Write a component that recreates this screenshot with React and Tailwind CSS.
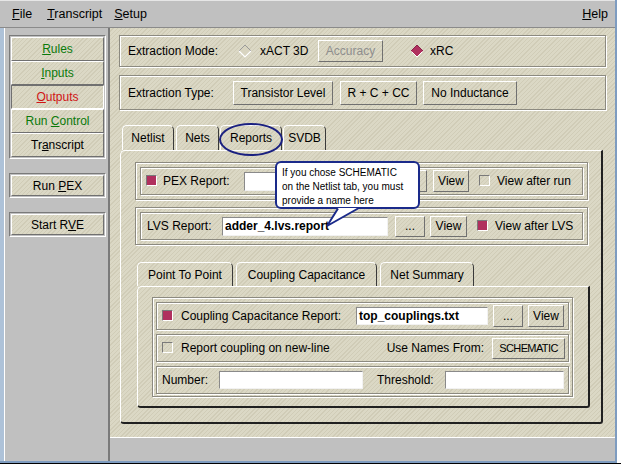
import React from "react";

const TEX =
  "bg-[#d8d4c0] bg-[repeating-linear-gradient(135deg,#dbd8c5_0px,#dbd8c5_2px,#d0ccb7_2px,#d0ccb7_3px)]";

function Check({ on }) {
  return (
    <span
      className={
        "inline-block shrink-0 w-[11px] h-[11px] border border-t-[#7a7a7a] border-l-[#7a7a7a] border-r-white border-b-white " +
        (on ? "bg-[#b0305e]" : TEX)
      }
    />
  );
}

function Btn({ children, className = "" }) {
  return (
    <div
      className={
        "flex items-center justify-center shrink-0 border border-t-white border-l-white border-r-[#707070] border-b-[#707070] " +
        TEX +
        " " +
        className
      }
    >
      {children}
    </div>
  );
}

function Input({ children, className = "" }) {
  return (
    <div
      className={
        "flex items-center shrink-0 bg-white border border-t-[#8a8a8a] border-l-[#8a8a8a] border-r-[#f2f2f2] border-b-[#f2f2f2] pl-[2px] font-bold " +
        className
      }
    >
      {children}
    </div>
  );
}

const etched =
  "border border-[#8c8a80] shadow-[inset_1px_1px_0_#ffffff,1px_1px_0_#ffffff]";

function Tab({ children, className = "" }) {
  return (
    <div
      className={
        "flex items-center justify-center shrink-0 h-full border-l border-t border-r border-l-white border-t-white border-r-[#3a3a3a] rounded-t-[5px] " +
        className
      }
    >
      {children}
    </div>
  );
}

function LeftBtn({ children, className = "", sunken = false, tall = true }) {
  return (
    <div
      className={
        "flex items-center justify-center w-[93px] border " +
        TEX +
        " " +
        (tall ? "h-[24px] " : "h-[21px] ") +
        (sunken
          ? "border-t-[#707070] border-l-[#707070] border-r-white border-b-white "
          : "border-t-white border-l-white border-r-[#707070] border-b-[#707070] ") +
        className
      }
    >
      {children}
    </div>
  );
}

function HollowDiamond() {
  return (
    <svg width="14" height="14" viewBox="0 0 14 14" className="shrink-0">
      <path d="M7 1 L13 7 L7 13 L1 7 Z" fill="#d8d4c0" />
      <path d="M1 7 L7 1 L13 7" stroke="#9a9a9a" strokeWidth="1" fill="none" />
      <path d="M1 7 L7 13 L13 7" stroke="#ffffff" strokeWidth="1.2" fill="none" />
    </svg>
  );
}

function FilledDiamond() {
  return (
    <svg width="14" height="14" viewBox="0 0 14 14" className="shrink-0">
      <path d="M7 1 L13 7 L7 13 L1 7 Z" fill="#b0305e" />
      <path d="M1 7 L7 1 L13 7" stroke="#8a2048" strokeWidth="1" fill="none" />
      <path d="M1.5 7.5 L7 13 L12.5 7.5" stroke="#ffffff" strokeWidth="1" fill="none" />
    </svg>
  );
}

const frame =
  "border border-t-[#7a7a7a] border-l-[#7a7a7a] border-r-white border-b-white p-[1px] w-[97px]";

export default function App() {
  return (
    <div className="relative w-[621px] h-[466px] overflow-hidden bg-white font-['Liberation_Sans',Arial,sans-serif] text-[12px] leading-none text-black">
      <div className="flex flex-col w-[617px] h-[463px] border-r-2 border-b-2 border-[#7e9cc0]">
        {/* Menu bar */}
        <div className="flex items-center h-[28px] shrink-0 bg-[#c0c0c0] border-t border-t-[#e6e6e6] border-b border-b-[#8a8a8a] text-[12.5px] pl-[12px] pt-[1px]">
          <span>
            <u>F</u>ile
          </span>
          <span className="ml-[15px]">
            <u>T</u>ranscript
          </span>
          <span className="ml-[12px]">
            <u>S</u>etup
          </span>
          <span className="ml-auto mr-[7px]">
            <u>H</u>elp
          </span>
        </div>

        {/* Body */}
        <div className="flex flex-1 min-h-0">
          <div className="w-[4px] shrink-0 bg-[#aec2d8]" />
          {/* Left panel */}
          <div className="flex flex-col w-[106px] shrink-0 bg-[#c0c0c0] border-l border-l-white border-r-2 border-r-[#7a7a7a] pl-[4px] pt-[7px]">
            <div className={"flex flex-col " + frame}>
              <LeftBtn className="text-[#0a7a0a]">
                <span>
                  <u>R</u>ules
                </span>
              </LeftBtn>
              <LeftBtn className="text-[#0a7a0a]">
                <span>
                  <u>I</u>nputs
                </span>
              </LeftBtn>
              <LeftBtn sunken className="text-[#d01414]">
                <span>
                  <u>O</u>utputs
                </span>
              </LeftBtn>
              <LeftBtn className="text-[#0a7a0a]">
                <span>
                  Run <u>C</u>ontrol
                </span>
              </LeftBtn>
              <LeftBtn>
                <span>
                  Tr<u>a</u>nscript
                </span>
              </LeftBtn>
            </div>
            <div className={"mt-[14px] " + frame}>
              <LeftBtn tall={false}>
                <span>
                  Run <u>P</u>EX
                </span>
              </LeftBtn>
            </div>
            <div className={"mt-[14px] " + frame}>
              <LeftBtn tall={false}>
                <span>
                  Start R<u>V</u>E
                </span>
              </LeftBtn>
            </div>
          </div>

          {/* Main */}
          <div className="flex flex-col flex-1 min-w-0">
            <div className={"flex flex-col flex-1 min-h-0 pt-[7px] " + TEX}>
              {/* Extraction mode */}
              <div className={"flex items-center ml-[9px] w-[487px] h-[32px] shrink-0 " + etched}>
                <span className="ml-[8px] w-[110px] shrink-0">Extraction Mode:</span>
                <HollowDiamond />
                <span className="ml-[8px] w-[58px] shrink-0">xACT 3D</span>
                <Btn className="w-[65px] h-[22px] text-[#8e8e8e]">Accuracy</Btn>
                <span className="ml-[27px]">
                  <FilledDiamond />
                </span>
                <span className="ml-[6px]">xRC</span>
              </div>

              {/* Extraction type */}
              <div className={"flex items-center mt-[8px] ml-[9px] w-[487px] h-[35px] shrink-0 " + etched}>
                <span className="ml-[8px] w-[105px] shrink-0">Extraction Type:</span>
                <Btn className="w-[100px] h-[24px]">Transistor Level</Btn>
                <Btn className="ml-[7px] w-[77px] h-[24px]">R + C + CC</Btn>
                <Btn className="ml-[6px] w-[94px] h-[24px]">No Inductance</Btn>
              </div>

              {/* Tabs */}
              <div className="flex items-end mt-[15px] ml-[12px] h-[25px] shrink-0">
                <Tab className="w-[52px]">Netlist</Tab>
                <Tab className="ml-[2px] w-[43px]">Nets</Tab>
                <Tab className="ml-[1px] w-[62px]">Reports</Tab>
                <Tab className="ml-[1px] w-[43px]">SVDB</Tab>
              </div>

              {/* Tab panel */}
              <div className="flex flex-col ml-[10px] w-[483px] h-[274px] shrink-0 border-l border-t border-l-white border-t-white border-r-2 border-b-2 border-r-[#202020] border-b-[#202020] rounded-tl-[5px] rounded-bl-[4px] rounded-br-[3px]">
                {/* PEX report */}
                <div className={"ml-[14px] mt-[11px] w-[453px] h-[38px] shrink-0 p-[4px] " + etched}>
                  <div className={"flex items-center w-full h-full " + etched}>
                    <span className="ml-[5px]">
                      <Check on />
                    </span>
                    <span className="ml-[6px] w-[81px] shrink-0">PEX Report:</span>
                    <Input className="w-[147px] h-[19px]" />
                    <Btn className="ml-[6px] w-[30px] h-[22px]">...</Btn>
                    <Btn className="ml-[6px] w-[36px] h-[22px]">View</Btn>
                    <span className="ml-[10px]">
                      <Check />
                    </span>
                    <span className="ml-[7px]">View after run</span>
                  </div>
                </div>

                {/* LVS report */}
                <div className={"ml-[14px] mt-[7px] w-[453px] h-[38px] shrink-0 p-[4px] " + etched}>
                  <div className={"flex items-center w-full h-full " + etched}>
                    <span className="ml-[6px] w-[75px] shrink-0">LVS Report:</span>
                    <Input className="w-[166px] h-[19px]">adder_4.lvs.report</Input>
                    <Btn className="ml-[7px] w-[30px] h-[21px]">...</Btn>
                    <Btn className="ml-[5px] w-[37px] h-[21px]">View</Btn>
                    <span className="ml-[10px]">
                      <Check on />
                    </span>
                    <span className="ml-[7px]">View after LVS</span>
                  </div>
                </div>

                {/* Inner tabs */}
                <div className="flex items-end mt-[17px] ml-[16px] h-[24px] shrink-0">
                  <Tab className="w-[96px]">Point To Point</Tab>
                  <Tab className="ml-[3px] w-[141px]">Coupling Capacitance</Tab>
                  <Tab className="ml-[3px] w-[94px]">Net Summary</Tab>
                </div>

                {/* Inner panel */}
                <div className="flex flex-col ml-[16px] w-[453px] h-[122px] shrink-0 border-l border-t border-l-white border-t-white border-r-2 border-b-2 border-r-[#202020] border-b-[#202020] rounded-tl-[5px] rounded-bl-[4px] rounded-br-[3px]">
                  <div className={"flex flex-col gap-[4px] ml-[14px] mt-[10px] w-[421px] h-[100px] shrink-0 px-[3px] pt-[4px] " + etched}>
                    <div className={"flex items-center h-[28px] shrink-0 " + etched}>
                      <span className="ml-[5px]">
                        <Check on />
                      </span>
                      <span className="ml-[8px] w-[175px] shrink-0">Coupling Capacitance Report:</span>
                      <Input className="w-[132px] h-[18px]">top_couplings.txt</Input>
                      <Btn className="ml-[5px] w-[30px] h-[22px]">...</Btn>
                      <Btn className="ml-[5px] w-[36px] h-[22px]">View</Btn>
                    </div>
                    <div className={"flex items-center h-[28px] shrink-0 " + etched}>
                      <span className="ml-[5px]">
                        <Check />
                      </span>
                      <span className="ml-[8px]">Report coupling on new-line</span>
                      <span className="ml-auto">Use Names From:</span>
                      <Btn className="ml-[8px] mr-[3px] w-[73px] h-[21px] text-[11px] tracking-[-0.6px]">SCHEMATIC</Btn>
                    </div>
                    <div className={"flex items-center h-[28px] shrink-0 " + etched}>
                      <span className="ml-[5px] w-[57px] shrink-0">Number:</span>
                      <Input className="w-[144px] h-[18px]" />
                      <span className="ml-[14px] w-[68px] shrink-0">Threshold:</span>
                      <Input className="w-[119px] h-[18px]" />
                    </div>
                  </div>
                </div>
              </div>
            </div>

            {/* Status bar */}
            <div className="h-[24px] shrink-0 bg-[#c0c0c0] border-t border-t-white" />
          </div>
        </div>
      </div>
      <div className="h-[1px] w-full bg-black" />

      {/* Annotation ellipse around Reports tab */}
      <div className="absolute left-[219px] top-[123px] w-[64px] h-[33px] rounded-[50%] border-2 border-[#1a2080]" />

      {/* Tooltip */}
      <div className="absolute left-[275px] top-[161px] w-[145px] h-[48px] bg-white border-2 border-[#1a2a8a] rounded-[6px] pl-[5px] pt-[3px] text-[10px] leading-[14px]">
        <div>If you chose SCHEMATIC</div>
        <div>on the Netlist tab, you must</div>
        <div>provide a name here</div>
      </div>
      <svg className="absolute left-[320px] top-[200px]" width="45" height="30" viewBox="0 0 45 30">
        <polygon points="18,8 38,8 7,26" fill="#ffffff" />
        <polyline points="18,8.5 7,26 38,8.5" fill="none" stroke="#1a2a8a" strokeWidth="2" strokeLinejoin="miter" />
      </svg>
    </div>
  );
}
